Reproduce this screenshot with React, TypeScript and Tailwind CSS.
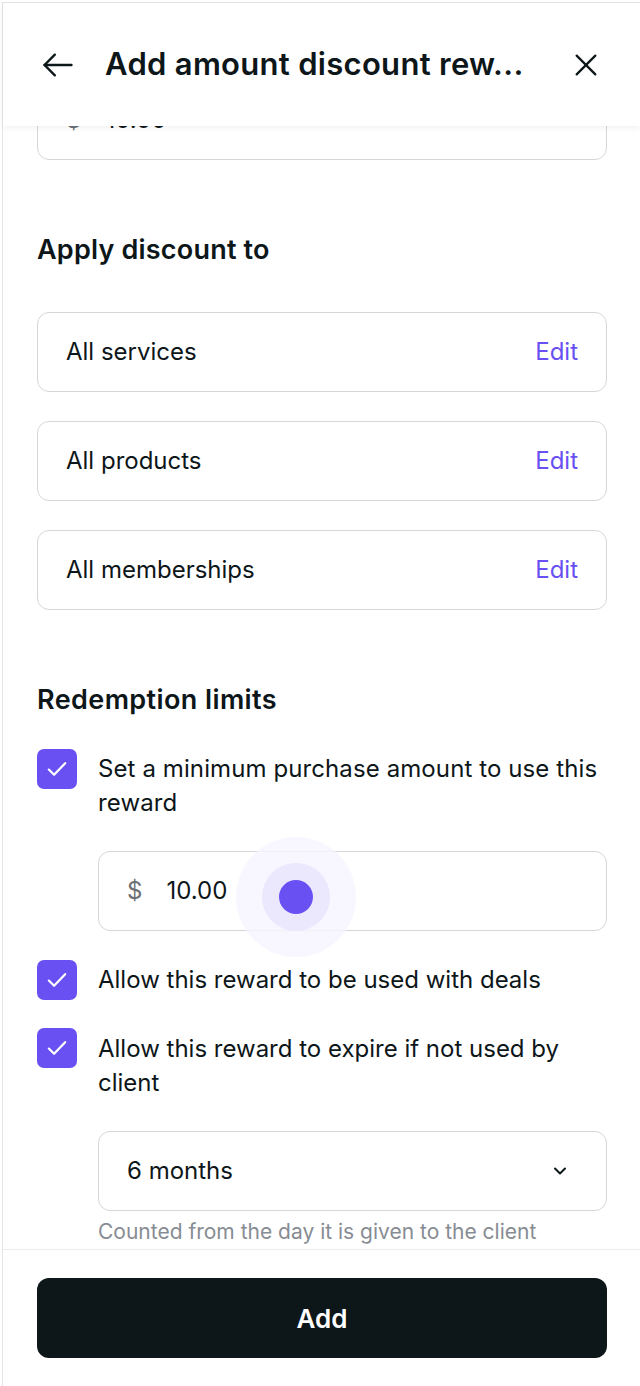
import React from "react";

function Check() {
  return (
    <div className="w-[40px] h-[40px] shrink-0 rounded-[7px] bg-[#6950f3] flex items-center justify-center">
      <svg width="28" height="28" viewBox="0 0 24 24" fill="none" stroke="white" strokeWidth="1.9" strokeLinecap="round" strokeLinejoin="round">
        <path d="M5 12.5l4.5 4.5L19 7" />
      </svg>
    </div>
  );
}

function CardRow({ label }: { label: string }) {
  return (
    <div className="h-[80px] rounded-[12px] border border-[#d5d7da] flex items-center justify-between pl-[28px] pr-[28px]">
      <span className="text-[24px] text-[#0d1619]">{label}</span>
      <span className="text-[24px] text-[#6950f3]">Edit</span>
    </div>
  );
}

export default function App() {
  return (
    <div className="w-[640px] h-[1386px] bg-white pt-[2px] pl-[2px] overflow-hidden" style={{ fontFamily: "Inter, 'Noto Sans', sans-serif" }}>
      <div className="h-full border-t border-l border-[#e3e4e6] flex flex-col">
        {/* Header */}
        <div className="relative z-10 h-[123px] shrink-0 bg-white shadow-[0_2px_6px_rgba(0,0,0,0.06)] flex items-center pl-[35px] pr-[38px]">
          <div className="w-[40px] h-[40px] flex items-center justify-center">
            <svg width="38" height="38" viewBox="0 0 24 24" fill="none" stroke="#0d1619" strokeWidth="1.5" strokeLinecap="round" strokeLinejoin="round">
              <path d="M20.5 12H3.5" />
              <path d="M10 5.5L3.5 12l6.5 6.5" />
            </svg>
          </div>
          <div className="ml-[27px] flex-1 text-[31px] font-semibold text-[#0d1619] tracking-[0.3px] whitespace-nowrap">
            Add amount discount rew...
          </div>
          <div className="w-[32px] h-[32px] flex items-center justify-center">
            <svg width="32" height="32" viewBox="0 0 24 24" fill="none" stroke="#0d1619" strokeWidth="1.7" strokeLinecap="round">
              <path d="M5 5l14 14" />
              <path d="M19 5L5 19" />
            </svg>
          </div>
        </div>

        {/* Scroll content */}
        <div className="flex-1 overflow-hidden pl-[34px] pr-[33px]">
          <div className="-mt-[46px] relative">
            <div className="h-[80px] rounded-[12px] border border-[#d5d7da] flex items-center pl-[28px] text-[24px]">
              <span className="text-[#6b7075]">$</span>
              <span className="ml-[24px] text-[#0d1619]">10.00</span>
            </div>

            <div className="mt-[74px] text-[27px] leading-[32px] font-semibold tracking-[0.2px] text-[#0d1619]">Apply discount to</div>

            <div className="mt-[46px] flex flex-col gap-[29px]">
              <CardRow label="All services" />
              <CardRow label="All products" />
              <CardRow label="All memberships" />
            </div>

            <div className="mt-[74px] text-[27px] leading-[32px] font-semibold tracking-[0.4px] text-[#0d1619]">Redemption limits</div>

            <div className="mt-[33px] flex items-start gap-[21px]">
              <Check />
              <div className="pt-[3px] text-[24px] leading-[34px] tracking-[0.1px] text-[#0d1619]">
                Set a minimum purchase amount to use this reward
              </div>
            </div>

            <div className="relative ml-[61px] mt-[31px] h-[80px] rounded-[12px] border border-[#d5d7da] flex items-center pl-[28px] text-[24px]">
              <span className="text-[#6b7075]">$</span>
              <span className="ml-[24px] text-[#0d1619]">10.00</span>
              <div className="absolute left-[137px] top-[-15px] w-[120px] h-[120px] rounded-full bg-[#f6f4fe]/80 flex items-center justify-center">
                <div className="w-[68px] h-[68px] rounded-full bg-[#ebe7fd] flex items-center justify-center">
                  <div className="w-[34px] h-[34px] rounded-full bg-[#6950f3]" />
                </div>
              </div>
            </div>

            <div className="mt-[29px] flex items-start gap-[21px]">
              <Check />
              <div className="pt-[3px] text-[24px] leading-[34px] text-[#0d1619]">
                Allow this reward to be used with deals
              </div>
            </div>

            <div className="mt-[28px] flex items-start gap-[21px]">
              <Check />
              <div className="pt-[4px] text-[24px] leading-[34px] text-[#0d1619]">
                Allow this reward to expire if not used by client
              </div>
            </div>

            <div className="ml-[61px] mt-[31px] h-[80px] rounded-[12px] border border-[#d5d7da] flex items-center justify-between pl-[28px] pr-[36px]">
              <span className="text-[24px] text-[#0d1619]">6 months</span>
              <svg width="20" height="20" viewBox="0 0 24 24" fill="none" stroke="#0d1619" strokeWidth="2.4" strokeLinecap="round" strokeLinejoin="round">
                <path d="M6 9l6 6 6-6" />
              </svg>
            </div>

            <div className="ml-[61px] mt-[7px] text-[21px] leading-[28px] text-[#878c93]">
              Counted from the day it is given to the client
            </div>
          </div>
        </div>

        {/* Footer */}
        <div className="shrink-0 border-t border-[#ebecee] bg-white pl-[34px] pr-[33px] pt-[28px] pb-[28px]">
          <div className="h-[80px] rounded-[12px] bg-[#0d1619] flex items-center justify-center text-white text-[26px] font-semibold">
            Add
          </div>
        </div>
      </div>
    </div>
  );
}
